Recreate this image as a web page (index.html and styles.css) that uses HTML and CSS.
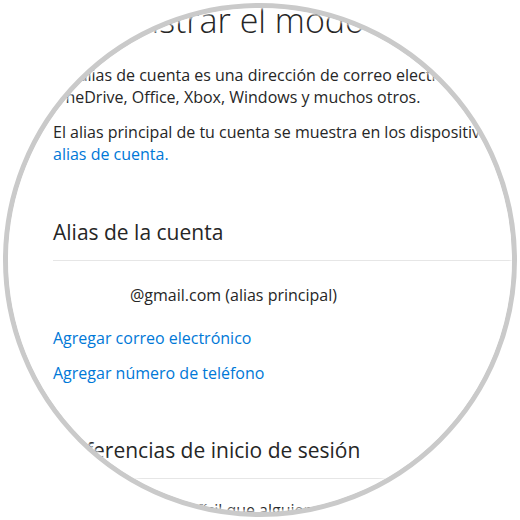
FILE: index.html
```html
<!DOCTYPE html>
<html lang="es">
<head>
    <meta charset="UTF-8">
    <meta name="viewport" content="width=device-width, initial-scale=1.0">
    <title>Administrar el modo en que inicias sesión</title>
    <link rel="stylesheet" href="styles.css">
</head>
<body>
    <div class="lens">
        <div class="page">
            <h1>Administrar el modo en que inicias sesión en Microsoft</h1>

            <p class="intro">Un alias de cuenta es una dirección de correo electrónico, número de teléfono o nombre de Skype que usas para iniciar sesión en Outlook.com, Skype,<br>OneDrive, Office, Xbox, Windows y muchos otros.</p>
            <p class="intro">El alias principal de tu cuenta se muestra en los dispositivos Windows 10. Más información acerca de<br><a href="#">alias de cuenta.</a></p>

            <section class="block">
                <h2>Alias de la cuenta</h2>
                <div class="alias-row">@gmail.com (alias principal)</div>
                <a class="action" href="#">Agregar correo electrónico</a>
                <a class="action" href="#">Agregar número de teléfono</a>
            </section>

            <section class="block">
                <h2>Preferencias de inicio de sesión</h2>
                <p class="note">Haz que sea más difícil que alguien pueda entrar en tu cuenta. Desactiva las preferencias de inicio de sesión para los alias que no usas.</p>
            </section>
        </div>
    </div>
</body>
</html>
```

FILE: styles.css
```css
body {
    margin: 0;
    background-color: #fff;
    font-family: "Open Sans", sans-serif;
    color: #262626;
}

.lens {
    position: relative;
    width: 504px;
    height: 504px;
    margin: 3px;
    border: 5px solid #cacaca;
    border-radius: 50%;
    overflow: hidden;
}

/* soft fade where the content meets the ring */
.lens::after {
    content: "";
    position: absolute;
    inset: 0;
    border-radius: 50%;
    box-shadow: inset 0 0 3px 1px #fff;
}

.page {
    width: 1000px;
    padding-left: 45px;
    font-size: 16px;
    line-height: 21.5px;
}

h1 {
    margin: -8px 0 25px;
    font-size: 34px;
    font-weight: 300;
    line-height: 40px;
    white-space: nowrap;
}

.intro {
    margin: 0 0 14px;
    white-space: nowrap;
}

a {
    color: #0078d7;
    text-decoration: none;
}

.block {
    margin-top: 53px;
}

.block + .block {
    margin-top: 51px;
}

h2 {
    margin: 0;
    padding-bottom: 14px;
    border-bottom: 1px solid #e6e6e6;
    font-size: 21px;
    font-weight: 400;
    line-height: 28px;
}

.alias-row {
    margin: 24px 0 21px;
    padding-left: 77px;
}

.action {
    display: block;
    margin-bottom: 14px;
}

.note {
    margin: 21px 0 0;
    white-space: nowrap;
}
```
